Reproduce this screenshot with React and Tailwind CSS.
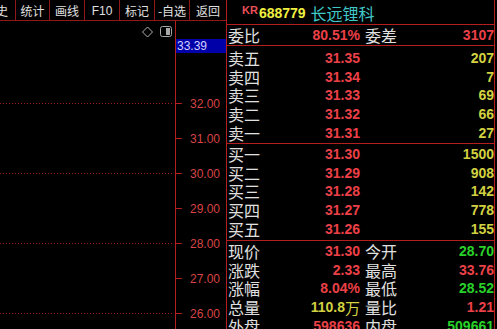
import React from "react";

const NUM = "font-['Liberation_Sans',sans-serif] font-bold text-[14px] leading-none whitespace-nowrap";
const CJK = "font-['Noto_Sans_CJK_SC',sans-serif] text-[16px] leading-none text-[#e0e0e0] whitespace-nowrap";
const R = "text-[#ec4048]";
const Y = "text-[#d2d240]";
const G = "text-[#28d228]";

const sells = [
  ["卖五", "31.35", "207"],
  ["卖四", "31.34", "7"],
  ["卖三", "31.33", "69"],
  ["卖二", "31.32", "66"],
  ["卖一", "31.31", "27"],
];
const buys = [
  ["买一", "31.30", "1500"],
  ["买二", "31.29", "908"],
  ["买三", "31.28", "142"],
  ["买四", "31.27", "778"],
  ["买五", "31.26", "155"],
];

function BookRow({ label, price, vol }) {
  return (
    <div className="h-[18.6px] flex items-center pl-[1px]">
      <div className="w-[132px] flex items-center justify-between">
        <span className={CJK}>{label}</span>
        <span className={`${NUM} ${R}`}>{price}</span>
      </div>
      <div className="flex-1 flex justify-end">
        <span className={`${NUM} ${Y}`}>{vol}</span>
      </div>
    </div>
  );
}

function StatRow({ l1, v1, c1, l2, v2, c2, h = "h-[18.6px]" }) {
  return (
    <div className={`${h} flex items-center pl-[1px] shrink-0`}>
      <div className="w-[132px] flex items-center justify-between">
        <span className={CJK}>{l1}</span>
        <span className={`${NUM} ${c1} flex items-center`}>{v1}</span>
      </div>
      <div className="ml-[5px] flex-1 flex items-center justify-between">
        <span className={CJK}>{l2}</span>
        <span className={`${NUM} ${c2}`}>{v2}</span>
      </div>
    </div>
  );
}

function Toolbar() {
  const cell =
    "h-full flex items-center justify-center pt-[1px] border-r border-[#901818] font-['Noto_Sans_CJK_SC',sans-serif]";
  return (
    <div className="h-[21px] shrink-0 flex border-b border-[#901818] text-[12px] leading-none text-[#e0e0e0]">
      <div className="w-[16px] h-full overflow-hidden border-r border-[#901818] flex items-center pt-[1px] font-['Noto_Sans_CJK_SC',sans-serif]">
        <span className="ml-[-4px] whitespace-nowrap">史</span>
      </div>
      <div className={`w-[34px] ${cell}`}>统计</div>
      <div className={`w-[35px] ${cell}`}>画线</div>
      <div className={`w-[35px] h-full flex items-center justify-center pt-[1px] border-r border-[#901818] font-['Liberation_Sans',sans-serif]`}>
        F10
      </div>
      <div className={`w-[35px] ${cell}`}>标记</div>
      <div className={`w-[35px] ${cell}`}>-自选</div>
      <div className="w-[36px] h-full flex items-center justify-center pt-[1px] font-['Noto_Sans_CJK_SC',sans-serif]">
        返回
      </div>
    </div>
  );
}

function Chart() {
  const levels = [
    [32, 103],
    [31, 138],
    [30, 173],
    [29, 208],
    [28, 243],
    [27, 278],
    [26, 313],
  ];
  return (
    <div className="relative flex-1">
      <svg width="226" height="308" className="block">
        <line x1="175.5" y1="0" x2="175.5" y2="308" stroke="#b41e1e" strokeWidth="1" />
        {levels.map(([p, y]) => {
          const yy = y - 21 + 0.5;
          return (
            <g key={p}>
              {p % 2 === 0 && (
                <line x1="0" y1={yy} x2="172" y2={yy} stroke="#9a1c1c" strokeWidth="1" strokeDasharray="1 2" />
              )}
              <line x1="175.5" y1={yy} x2="182" y2={yy} stroke="#b41e1e" strokeWidth="1" />
              <text
                x="220"
                y={y - 21 + 5}
                textAnchor="end"
                fontSize="12"
                fontFamily="Liberation Sans, sans-serif"
                fill="#d84444"
              >
                {p.toFixed(2)}
              </text>
            </g>
          );
        })}
        {/* diamond icon */}
        <polygon points="147.5,6 152.5,11 147.5,16 142.5,11" fill="none" stroke="#b4b4b4" strokeWidth="1" />
        {/* panel toggle icon */}
        <rect x="160.5" y="5.5" width="11" height="10" rx="2" fill="none" stroke="#a8a8a8" strokeWidth="1" />
        <rect x="166" y="7" width="4" height="7" fill="#a8a8a8" />
      </svg>
      <div className="absolute left-[176px] top-[18px] w-[50px] h-[14px] bg-[#0000a8] pl-[1px] flex items-center text-[12px] leading-none text-[#d0d0ff] font-['Liberation_Sans',sans-serif]">
        33.39
      </div>
    </div>
  );
}

export default function App() {
  return (
    <div className="w-[497px] h-[329px] bg-black flex overflow-hidden">
      <div className="w-[226px] h-full flex flex-col">
        <Toolbar />
        <Chart />
      </div>
      <div className="w-[269px] h-full border-x border-[#b41e1e] flex flex-col overflow-hidden">
        <div className="h-[25px] shrink-0 border-b border-[#b41e1e] flex items-start pl-[15px]">
          <span className="mt-[5px] font-['Liberation_Sans',sans-serif] font-bold text-[11px] leading-[11px] text-[#e8505a]">
            KR
          </span>
          <span className="mt-[6px] ml-[1px] font-['Liberation_Sans',sans-serif] font-bold text-[14px] leading-[14px] text-[#f0f040]">
            688779
          </span>
          <span className="mt-[5px] ml-[5px] font-['Noto_Sans_CJK_SC',sans-serif] text-[16px] leading-[16px] text-[#40c8c8]">
            长远锂科
          </span>
        </div>
        <div className="h-[21px] shrink-0 border-b border-[#b41e1e] flex flex-col">
          <StatRow h="h-[20px]" l1="委比" v1="80.51%" c1={R} l2="委差" v2="3107" c2={R} />
        </div>
        <div className="shrink-0 pt-[3px] pb-[1px] border-b border-[#b41e1e]">
          {sells.map(([l, p, v]) => (
            <BookRow key={l} label={l} price={p} vol={v} />
          ))}
        </div>
        <div className="shrink-0 pt-[1px] pb-[2px] border-b border-[#b41e1e]">
          {buys.map(([l, p, v]) => (
            <BookRow key={l} label={l} price={p} vol={v} />
          ))}
        </div>
        <div className="shrink-0 pt-[1px] flex flex-col">
          <StatRow l1="现价" v1="31.30" c1={R} l2="今开" v2="28.70" c2={G} />
          <StatRow l1="涨跌" v1="2.33" c1={R} l2="最高" v2="33.76" c2={R} />
          <StatRow l1="涨幅" v1="8.04%" c1={R} l2="最低" v2="28.52" c2={G} />
          <StatRow
            l1="总量"
            v1={
              <>
                <span>110.8</span>
                <span className="font-['Noto_Sans_CJK_SC',sans-serif] font-normal text-[15px]">万</span>
              </>
            }
            c1={Y}
            l2="量比"
            v2="1.21"
            c2={R}
          />
          <StatRow l1="外盘" v1="598636" c1={R} l2="内盘" v2="509661" c2={G} />
        </div>
      </div>
      <div className="w-[2px] h-full bg-black" />
    </div>
  );
}
